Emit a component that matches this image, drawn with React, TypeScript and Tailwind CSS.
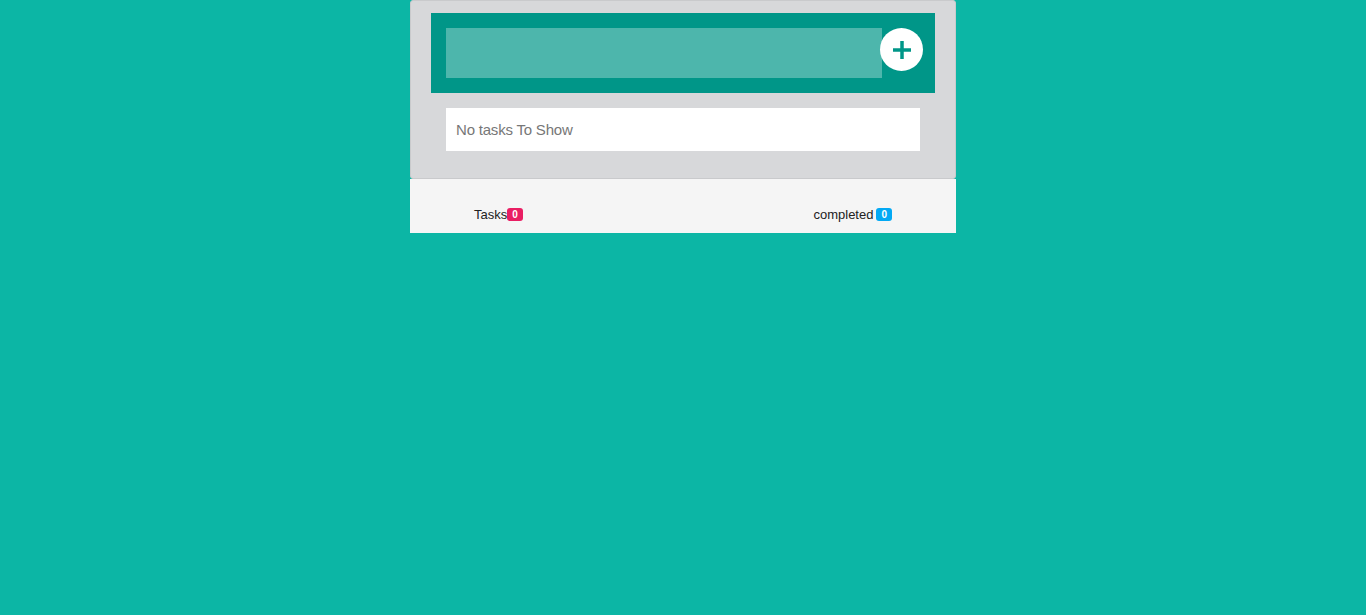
import { useState } from "react"

export default function App() {
  const [tasks] = useState<string[]>([])
  const [done] = useState<string[]>([])

  return (
    <div className="min-h-[615px] w-full bg-[#0cb6a5] font-['Liberation_Sans',Arial,sans-serif]">
      <div className="mx-auto w-[546px]">
        <div className="rounded-[3px] border border-[#c9cacc] bg-[#d7d8da] px-5 pt-[12px] pb-[27px]">
          <div className="flex h-[80px] items-start bg-[#009688] pl-[15px] pr-[12px] pt-[15px]">
            <input
              type="text"
              className="h-[50px] w-[436px] bg-[#4db6ac] px-3 text-white outline-none"
            />
            <button className="-ml-[2px] flex h-[43px] w-[43px] items-center justify-center rounded-full bg-white">
              <svg width="20" height="20" viewBox="0 0 20 20">
                <rect x="8.25" y="1" width="3.5" height="18" fill="#009688" />
                <rect x="1" y="8.25" width="18" height="3.5" fill="#009688" />
              </svg>
            </button>
          </div>
          <div className="mx-[15px] mt-[15px] flex h-[43px] items-center bg-white px-[10px] pt-[2px] text-[15px] tracking-[-0.2px] text-[#777]">
            {tasks.length === 0 ? "No tasks To Show" : null}
          </div>
        </div>
        <div className="flex h-[54px] justify-between bg-[#f5f5f5] px-16 pt-[29px] text-[13px] text-[#222]">
          <div className="flex h-[13px] items-center">
            <span>Tasks</span>
            <span className="flex h-[13px] items-center rounded-[3px] bg-[#e91e63] px-[5px] text-[10px] font-bold text-white">
              {tasks.length}
            </span>
          </div>
          <div className="flex h-[13px] items-center gap-[3px]">
            <span>completed</span>
            <span className="flex h-[13px] items-center rounded-[3px] bg-[#03a9f4] px-[5px] text-[10px] font-bold text-white">
              {done.length}
            </span>
          </div>
        </div>
      </div>
    </div>
  )
}
